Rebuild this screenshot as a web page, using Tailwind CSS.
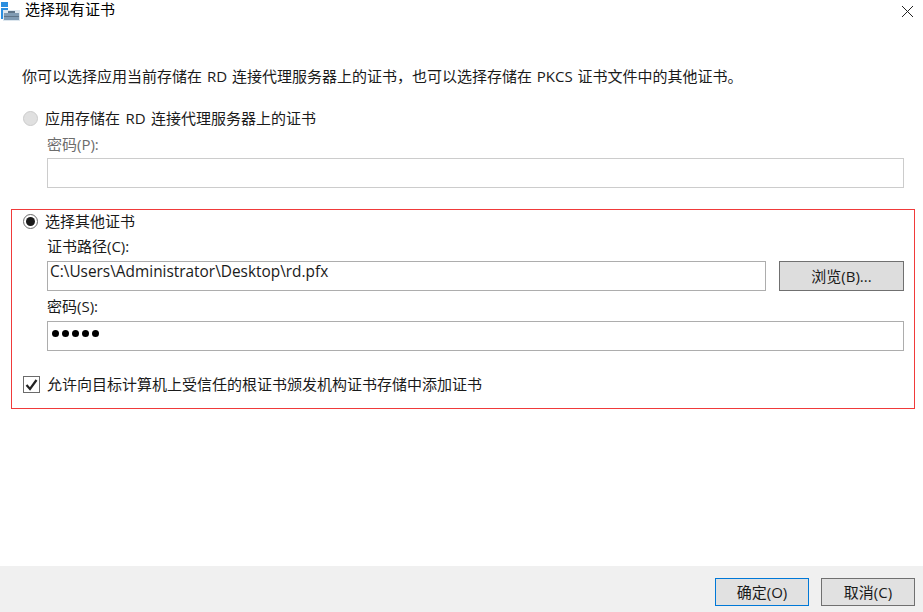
<!DOCTYPE html>
<html lang="zh-CN">
<head>
  <meta charset="UTF-8" />
  <title>选择现有证书</title>
  <script src="https://cdn.jsdelivr.net/npm/@tailwindcss/browser@4"></script>
</head>
<body class="bg-white text-[#1a1a1a] h-[612px] w-[923px] overflow-hidden flex flex-col text-[15px] leading-[20px] font-['Open_Sans','Noto_Sans_CJK_SC',sans-serif]">

  <!-- Title bar -->
  <div class="h-[24px] flex items-start shrink-0">
    <svg class="ml-[1px] mt-[2px]" width="20" height="20" viewBox="0 0 20 20">
      <rect x="0" y="0" width="7" height="5" fill="#2b8fe0"/>
      <rect x="0" y="6" width="7" height="11" fill="#2b8fe0"/>
      <rect x="2" y="8" width="17" height="11" fill="#dce6ee"/>
      <rect x="3" y="11" width="15" height="7" fill="#7f9bb3"/>
      <rect x="7" y="9" width="7" height="2" fill="#5d7488"/>
      <rect x="3" y="14" width="15" height="1" fill="#5d7488"/>
    </svg>
    <span class="ml-[4px] mt-[-1px] text-black">选择现有证书</span>
    <svg class="ml-auto mr-[9px] mt-[5px]" width="13" height="13" viewBox="0 0 13 13">
      <path d="M1 1 L12 12 M12 1 L1 12" stroke="#222" stroke-width="1" fill="none"/>
    </svg>
  </div>

  <!-- Content -->
  <div class="flex-1 flex flex-col">
    <p class="ml-[22px] mt-[42px] h-[20px] [word-spacing:1px]">你可以选择应用当前存储在 RD 连接代理服务器上的证书，也可以选择存储在 PKCS 证书文件中的其他证书。</p>

    <div class="ml-[23px] mt-[22px] flex items-center h-[20px]">
      <span class="w-[15px] h-[15px] rounded-full bg-[#e0e0e0] border border-[#cccccc]"></span>
      <span class="ml-[7px] [word-spacing:1.5px]">应用存储在 RD 连接代理服务器上的证书</span>
    </div>
    <div class="ml-[47px] mt-[6px] h-[20px] text-[#6d6d6d]">密码(P):</div>
    <div class="ml-[47px] mt-[4px] w-[857px] h-[30px] border border-[#cccccc]"></div>

    <!-- Highlighted section -->
    <div class="ml-[11px] mt-[21px] w-[904px] h-[200px] border border-[#f03a3a] flex flex-col">
      <div class="ml-[11px] mt-[1px] flex items-center h-[20px]">
        <span class="w-[15px] h-[15px] rounded-full border border-[#6b6b6b] flex items-center justify-center">
          <span class="w-[9px] h-[9px] rounded-full bg-[#1a1a1a]"></span>
        </span>
        <span class="ml-[7px]">选择其他证书</span>
      </div>
      <div class="ml-[35px] mt-[5px] h-[20px]">证书路径(C):</div>
      <div class="ml-[35px] mt-[5px] flex gap-[13px]">
        <div class="w-[719px] h-[30px] border border-[#adadad] pl-[2px] leading-[19px] text-[15.4px]">C:\Users\Administrator\Desktop\rd.pfx</div>
        <button class="w-[125px] h-[30px] bg-[#dddddd] border border-[#707070] text-center">浏览(B)...</button>
      </div>
      <div class="ml-[35px] mt-[5px] h-[20px]">密码(S):</div>
      <div class="ml-[35px] mt-[5px] w-[857px] h-[30px] border border-[#adadad] flex items-center gap-[3px] pl-[4px] pb-[5px]">
        <span class="w-[7px] h-[7px] rounded-full bg-black"></span>
        <span class="w-[7px] h-[7px] rounded-full bg-black"></span>
        <span class="w-[7px] h-[7px] rounded-full bg-black"></span>
        <span class="w-[7px] h-[7px] rounded-full bg-black"></span>
        <span class="w-[7px] h-[7px] rounded-full bg-black"></span>
      </div>
      <div class="ml-[11px] mt-[23px] flex items-center h-[20px]">
        <span class="w-[17px] h-[17px] border border-[#6b6b6b] flex items-center justify-center">
          <svg width="13" height="13" viewBox="0 0 13 13"><path d="M1.5 7 L5 11 L11.5 2" stroke="#222" stroke-width="2.2" fill="none"/></svg>
        </span>
        <span class="ml-[7px]">允许向目标计算机上受信任的根证书颁发机构证书存储中添加证书</span>
      </div>
    </div>
  </div>

  <!-- Footer -->
  <div class="h-[46px] shrink-0 bg-[#f0f0f0] flex justify-end gap-[12px] pt-[12px] pr-[8px]">
    <button class="w-[94px] h-[28px] bg-[#e1e1e1] border border-[#0078d7] text-center">确定(O)</button>
    <button class="w-[94px] h-[28px] bg-[#e1e1e1] border border-[#707070] text-center">取消(C)</button>
  </div>

</body>
</html>
